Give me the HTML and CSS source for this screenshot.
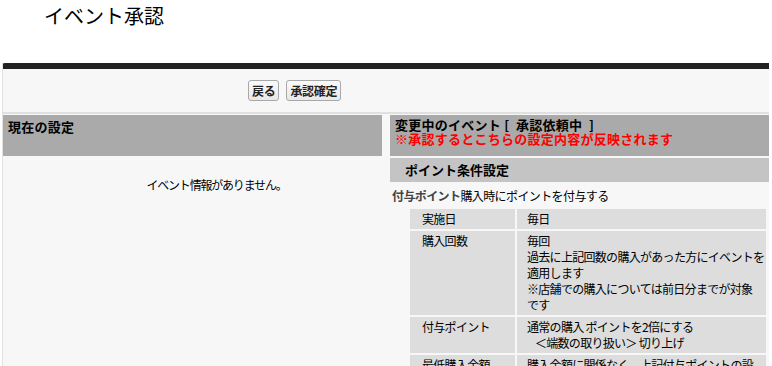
FILE: index.html
```html
<!DOCTYPE html>
<html lang="ja">
<head>
<meta charset="utf-8">
<title>イベント承認</title>
<link rel="stylesheet" href="styles.css">
</head>
<body>
<h1 class="page-title">イベント承認</h1>
<div class="panel">
  <div class="panel-bar"></div>
  <div class="actions">
    <button class="btn">戻る</button>
    <button class="btn">承認確定</button>
  </div>
  <div class="cols">
    <div class="col">
      <div class="col-head">現在の設定</div>
      <p class="empty">イベント情報がありません。</p>
    </div>
    <div class="col">
      <div class="col-head"><span class="head-line">変更中のイベント [&ensp;承認依頼中&ensp;]</span><span class="head-line warn">※承認するとこちらの設定内容が反映されます</span></div>
      <div class="sub-head">ポイント条件設定</div>
      <p class="lead"><span class="lead-key">付与ポイント</span>購入時にポイントを付与する</p>
      <table class="cond">
        <tr><th>実施日</th><td>毎日</td></tr>
        <tr><th>購入回数</th><td>毎回<br>過去に上記回数の購入があった方にイベントを<br>適用します<br>※店舗での購入については前日分までが対象<br>です</td></tr>
        <tr><th>付与ポイント</th><td>通常の購入 ポイントを2倍にする<br>&nbsp;&nbsp;&nbsp;&nbsp;＜端数の取り扱い＞ 切り上げ</td></tr>
        <tr><th>最低購入金額</th><td>購入金額に関係なく、上記付与ポイントの設<br>定を適用します</td></tr>
      </table>
    </div>
  </div>
</div>
</body>
</html>
```
FILE: styles.css
```css
html, body {
  margin: 0;
  padding: 0;
  background: #ffffff;
  font-family: "Noto Sans CJK JP", "Noto Sans", sans-serif;
  color: #000;
}
.page-title {
  margin: 0;
  height: 63px;
  padding: 2px 0 0 44px;
  box-sizing: border-box;
  font-size: 20px;
  font-weight: normal;
  line-height: 28px;
}
.panel {
  margin: 0 3px 0 2px;
  background: #f7f7f7;
  border-left: 1px solid #e2e2e2;
  height: 320px;
  overflow: hidden;
}
.panel-bar {
  height: 6px;
  background: #222222;
  border-top-left-radius: 3px;
  margin-left: -1px;
}
.actions {
  height: 45px;
  display: flex;
  justify-content: flex-start;
  align-items: center;
  gap: 7px;
  border-bottom: 2px solid #e0e0e0;
  box-sizing: border-box;
  padding-left: 245px;
}
.btn {
  font-family: "Noto Sans CJK JP", sans-serif;
  font-size: 12px;
  font-weight: bold;
  height: 21px;
  padding: 0 3px;
  line-height: 19px;
  background: linear-gradient(#fafafa, #e8e8e8);
  border: 1px solid #a8a8a8;
  border-radius: 3px;
  color: #222;
  letter-spacing: -0.3px;
}
.cols {
  display: grid;
  grid-template-columns: 1fr 1fr;
  column-gap: 8px;
  padding-top: 1px;
}
.col-head {
  background: #aaaaaa;
  height: 41px;
  box-sizing: border-box;
  padding: 2px 5px;
  font-size: 13px;
  font-weight: bold;
  line-height: 15px;
  letter-spacing: 0.25px;
  display: flex;
  flex-direction: column;
}
.head-line {
  display: block;
  height: 14px;
  line-height: 15px;
}
.col:first-child .col-head {
  padding-top: 4px;
}
.warn {
  color: #ff0000;
}
.empty {
  margin: 20px 0 0;
  padding-left: 48px;
  text-align: center;
  font-size: 12px;
  letter-spacing: -1.2px;
}
.sub-head {
  margin-top: 2px;
  background: #c4c4c4;
  height: 24px;
  box-sizing: border-box;
  padding: 4px 0 0 15px;
  font-size: 13px;
  font-weight: bold;
  line-height: 16px;
}
.lead {
  margin: 6px 0 0 2px;
  font-size: 12px;
  line-height: 15px;
  letter-spacing: -0.6px;
}
.lead-key {
  color: #444;
  font-weight: bold;
}
.cond {
  margin: 4px 0 0 18px;
  border-collapse: separate;
  border-spacing: 2px;
  width: calc(100% - 19px);
  font-size: 12px;
  line-height: 16px;
  letter-spacing: -0.7px;
}
.cond th, .cond td {
  background: #dddddd;
  vertical-align: top;
  text-align: left;
  font-weight: normal;
  padding: 2px 0 2px 10px;
  white-space: nowrap;
}
.cond th {
  width: 93px;
  padding-left: 12px;
}
```
